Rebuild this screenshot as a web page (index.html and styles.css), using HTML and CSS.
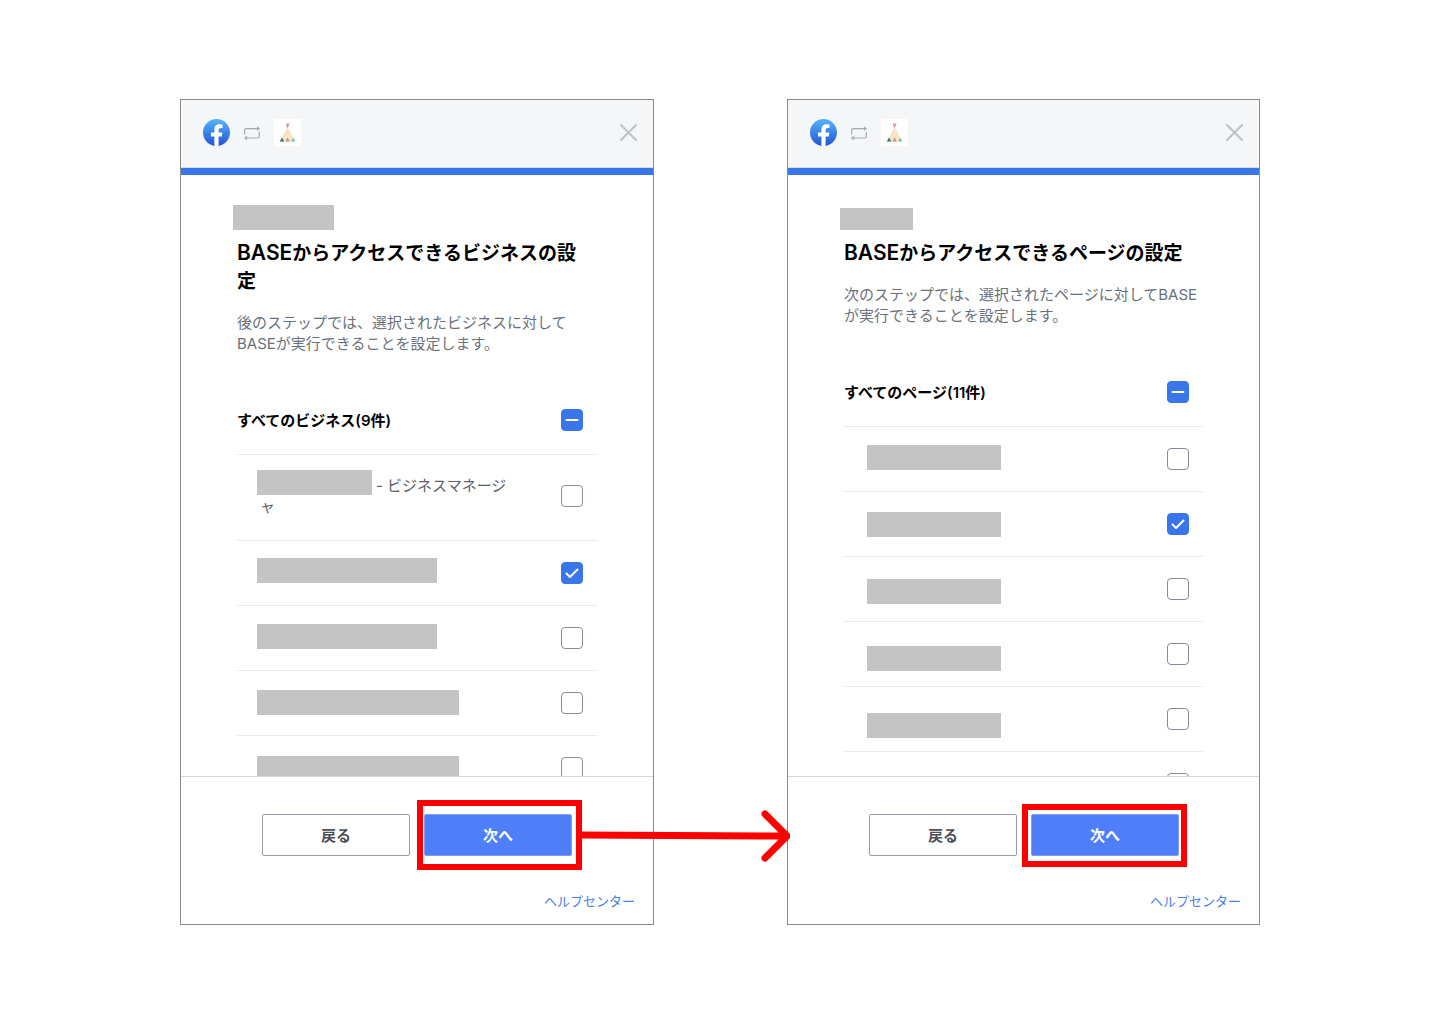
FILE: index.html
```
<!DOCTYPE html>
<html lang="ja">
<head>
<meta charset="utf-8">
<meta name="viewport" content="width=device-width, initial-scale=1">
<title>BASEからアクセスできる項目の設定</title>
<link rel="stylesheet" href="styles.css">
</head>
<body>
<svg class="defs" aria-hidden="true">
  <defs>
    <linearGradient id="fb-blue" x1="0" y1="0" x2="0" y2="1">
      <stop offset="0" stop-color="#55b5f9"/>
      <stop offset="1" stop-color="#2453d6"/>
    </linearGradient>
    <symbol id="icon-facebook" viewBox="0 0 24 24">
      <circle cx="12" cy="12" r="11" fill="#fff"/>
      <path fill="url(#fb-blue)" d="M24 12.073c0-6.627-5.373-12-12-12s-12 5.373-12 12c0 5.99 4.388 10.954 10.125 11.854v-8.385H7.078v-3.47h3.047V9.43c0-3.007 1.792-4.669 4.533-4.669 1.312 0 2.686.235 2.686.235v2.953H15.83c-1.491 0-1.956.925-1.956 1.874v2.25h3.328l-.532 3.47h-2.796v8.385C19.612 23.027 24 18.062 24 12.073z"/>
    </symbol>
    <symbol id="icon-exchange" viewBox="0 0 16 14">
      <g fill="none" stroke="#a5a9b3" stroke-width="1.2" stroke-linecap="round" stroke-linejoin="round">
        <path d="M.7 8V3.8Q.7 2.6 1.9 2.6H15M13.4 1.2 15.2 2.6 13.4 4"/>
        <path d="M15.3 6.2v4.6q0 1.2-1.2 1.2H1M2.6 10.6.8 12l1.8 1.4"/>
      </g>
    </symbol>
    <symbol id="icon-tent" viewBox="0 0 27 27">
      <rect width="27" height="27" fill="#fff"/>
      <path d="M13.5 8 21.5 22.5H5.8Z" fill="#f6e6c8"/>
      <path d="M12.2 4.6 13.6 8.4 15 4.6" fill="#e8a6a8" stroke="#b98a92" stroke-width=".8"/>
      <path d="M8 18.6 10.2 22.6H5.8Z" fill="#2f7561"/>
      <path d="M13.6 18.6 15.8 22.6H11.4Z" fill="#dd8590"/>
      <path d="M19.2 18.6 21.4 22.6H17Z" fill="#7cc3a5"/>
    </symbol>
    <symbol id="icon-close" viewBox="0 0 17 17">
      <path d="M1 1 16 16M16 1 1 16" stroke="#bfc1c6" stroke-width="2" stroke-linecap="round"/>
    </symbol>
  </defs>
</svg>

<main class="flow">
  <section class="panel">
    <header class="panel-header">
      <svg class="logo" role="img" aria-label="Facebook"><use href="#icon-facebook"/></svg>
      <svg class="exchange" aria-hidden="true"><use href="#icon-exchange"/></svg>
      <svg class="logo" role="img" aria-label="BASE"><use href="#icon-tent"/></svg>
      <button class="close" type="button" aria-label="閉じる"><svg><use href="#icon-close"/></svg></button>
    </header>
    <div class="panel-body">
      <div class="eyebrow"><span class="mask mask-user"></span></div>
      <h1><span class="latin">BASE</span>からアクセスできるビジネスの設<br>定</h1>
      <p class="lead">後のステップでは、選択されたビジネスに対してBASEが実行できることを設定します。</p>
      <div class="row row-all">
        <label for="biz-all">すべてのビジネス(9件)</label>
        <input class="check check-some" type="checkbox" id="biz-all">
      </div>
      <div class="list">
        <div class="row row-tall">
          <label class="masked-name" for="biz-1">- ビジネスマネージ<br>ャ</label>
          <input class="check" type="checkbox" id="biz-1">
        </div>
        <div class="row"><input class="check" type="checkbox" aria-label="ビジネス 2" checked></div>
        <div class="row"><input class="check" type="checkbox" aria-label="ビジネス 3"></div>
        <div class="row"><input class="check" type="checkbox" aria-label="ビジネス 4"></div>
        <div class="row"><input class="check" type="checkbox" aria-label="ビジネス 5"></div>
        <div class="masks masks-business" aria-hidden="true">
          <span class="mask mask-inline"></span>
          <span class="mask mask-medium"></span>
          <span class="mask mask-medium"></span>
          <span class="mask mask-long"></span>
          <span class="mask mask-long"></span>
        </div>
      </div>
    </div>
    <footer class="panel-footer">
      <div class="actions">
        <button class="button" type="button">戻る</button>
        <div class="marked marked-first">
          <button class="button button-primary" type="button">次へ</button>
          <div class="marker">
            <svg class="arrow" viewBox="0 0 214 60" aria-hidden="true">
              <path d="M3 29 211 30M189 8 211 30 189 52" fill="none" stroke="#f00" stroke-width="7" stroke-linecap="round" stroke-linejoin="round"/>
            </svg>
          </div>
        </div>
      </div>
      <a class="help" href="#help">ヘルプセンター</a>
    </footer>
  </section>

  <section class="panel">
    <header class="panel-header">
      <svg class="logo" role="img" aria-label="Facebook"><use href="#icon-facebook"/></svg>
      <svg class="exchange" aria-hidden="true"><use href="#icon-exchange"/></svg>
      <svg class="logo" role="img" aria-label="BASE"><use href="#icon-tent"/></svg>
      <button class="close" type="button" aria-label="閉じる"><svg><use href="#icon-close"/></svg></button>
    </header>
    <div class="panel-body">
      <div class="eyebrow"><span class="mask mask-user-short"></span></div>
      <h1><span class="latin">BASE</span>からアクセスできるページの設定</h1>
      <p class="lead">次のステップでは、選択されたページに対してBASEが実行できることを設定します。</p>
      <div class="row row-all">
        <label for="page-all">すべてのページ(11件)</label>
        <input class="check check-some" type="checkbox" id="page-all">
      </div>
      <div class="list">
        <div class="row"><input class="check" type="checkbox" aria-label="ページ 1"></div>
        <div class="row"><input class="check" type="checkbox" aria-label="ページ 2" checked></div>
        <div class="row"><input class="check" type="checkbox" aria-label="ページ 3"></div>
        <div class="row"><input class="check" type="checkbox" aria-label="ページ 4"></div>
        <div class="row"><input class="check" type="checkbox" aria-label="ページ 5"></div>
        <div class="row"><input class="check" type="checkbox" aria-label="ページ 6"></div>
        <div class="masks masks-page" aria-hidden="true">
          <span class="mask"></span>
          <span class="mask"></span>
          <span class="mask"></span>
          <span class="mask"></span>
          <span class="mask"></span>
        </div>
      </div>
    </div>
    <footer class="panel-footer">
      <div class="actions">
        <button class="button" type="button">戻る</button>
        <div class="marked marked-second">
          <button class="button button-primary" type="button">次へ</button>
          <div class="marker"></div>
        </div>
      </div>
      <a class="help" href="#help">ヘルプセンター</a>
    </footer>
  </section>
</main>
</body>
</html>
```

FILE: styles.css
```
* {
  box-sizing: border-box;
}

body {
  margin: 0;
  background: #fff;
  color: #000;
  font-family: Inter, "Noto Sans CJK JP", sans-serif;
  font-size: 15px;
  line-height: 21px;
}

.defs {
  position: absolute;
  width: 0;
  height: 0;
}

.flow {
  display: grid;
  grid-template-columns: 474fr 473fr;
  gap: 133px;
  padding: 99px 180px;
}

.panel {
  border: 1px solid #8a8a8a;
  background: #fff;
}

/* Header */

.panel-header {
  display: flex;
  align-items: center;
  gap: 14px;
  height: 75px;
  padding: 0 16px 3px 22px;
  border-bottom: 7px solid #3876ea;
  background: #f4f6f8;
  box-shadow: inset 0 -1px #d9dbdd;
}

.logo {
  width: 27px;
  height: 27px;
}

.exchange {
  width: 16px;
  height: 14px;
}

.close {
  display: flex;
  margin-left: auto;
  padding: 0;
  border: 0;
  background: none;
}

.close svg {
  width: 17px;
  height: 17px;
}

.panel-body {
  height: 601px;
  padding: 0 56px;
  overflow: hidden;
}

.eyebrow {
  display: flex;
  align-items: flex-end;
  height: 65px;
  margin-left: -4px;
  padding-bottom: 10px;
}

h1 {
  margin: 0 0 16px;
  font-size: 19px;
  font-weight: 600;
  line-height: 28px;
}

.latin {
  font-size: 21px;
  line-height: 20px;
}

.lead {
  margin: 0 0 33px;
  color: #6b717c;
}

.list {
  position: relative;
}

.row {
  display: flex;
  align-items: center;
  height: 65px;
  padding-right: 14px;
  border-bottom: 1px solid #e6e8ec;
}

.row-all {
  height: 68px;
  padding-bottom: 1px;
  font-weight: 600;
}

.row-tall {
  height: 86px;
  padding-bottom: 3px;
}

.masked-name {
  padding-left: 23px;
  color: #5b616b;
  text-indent: 116px;
}

.check {
  appearance: none;
  width: 22px;
  height: 22px;
  margin: 0 0 0 auto;
  border: 1px solid #858b97;
  border-radius: 4px;
  background: #fff center / 22px 22px no-repeat;
}

.check:checked,
.check-some {
  border-color: #3876ea;
  background-color: #3876ea;
}

.check:checked {
  background-image: url("data:image/svg+xml,%3Csvg xmlns='http://www.w3.org/2000/svg' viewBox='0 0 22 22'%3E%3Cpath d='M5.5 11.5 9 15 16.5 7.5' fill='none' stroke='white' stroke-width='2' stroke-linecap='round' stroke-linejoin='round'/%3E%3C/svg%3E");
}

.check-some {
  background-image: url("data:image/svg+xml,%3Csvg xmlns='http://www.w3.org/2000/svg' viewBox='0 0 22 22'%3E%3Cpath d='M5.5 11H16.5' stroke='white' stroke-width='2' stroke-linecap='round'/%3E%3C/svg%3E");
}

/* Grey bars that hide private names */

.mask {
  width: 134px;
  height: 25px;
  background: #c4c4c4;
}

.masks {
  position: absolute;
  display: flex;
  flex-direction: column;
}

.masks-business {
  top: 15px;
  left: 20px;
  gap: 41px;
}

.masks-page {
  top: 18px;
  left: 23px;
  gap: 42px;
}

.mask-user {
  width: 101px;
}

.mask-user-short {
  width: 73px;
  height: 22px;
}

.mask-inline {
  width: 115px;
  margin-bottom: 22px;
}

.mask-medium {
  width: 180px;
}

.mask-long {
  width: 202px;
}

/* Footer */

.panel-footer {
  display: flex;
  flex-direction: column;
  padding: 37px 0 12px;
  border-top: 1px solid #d3d5d9;
}

.actions {
  display: flex;
  gap: 14px;
  padding-left: 81px;
}

.button {
  width: 148px;
  height: 42px;
  padding: 0;
  border: 1px solid #9a9ea8;
  border-radius: 2px;
  background: #fff;
  color: #4b4f56;
  font: inherit;
  font-weight: 600;
}

.button-primary {
  border-color: #7d9ff5;
  background: #4f7ff8;
  color: #fff;
}

.help {
  align-self: flex-end;
  margin: 35px 18px 0 0;
  color: #4a7fe8;
  font-size: 13px;
  text-decoration: none;
}

/* Red step markers */

.marked {
  position: relative;
}

.marker {
  position: absolute;
  z-index: 1;
  border: 6px solid #f00;
  pointer-events: none;
}

.marked-first .marker {
  inset: -14px -10px -14px -7px;
}

.marked-second .marker {
  inset: -10px -8px -11px -9px;
}

.arrow {
  position: absolute;
  top: 0;
  left: 100%;
  width: 214px;
  height: 60px;
}
```
